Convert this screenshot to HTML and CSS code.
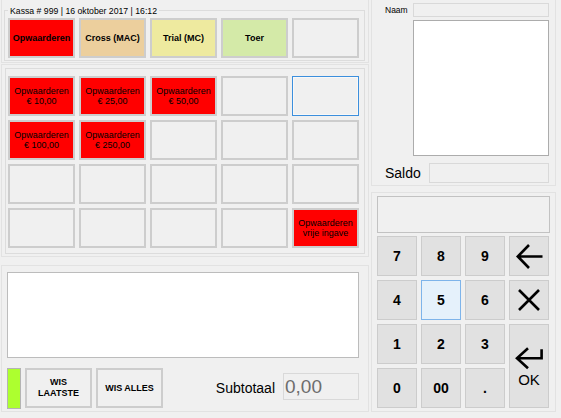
FILE: index.html
```html
<!DOCTYPE html>
<html>
<head>
<meta charset="utf-8">
<link rel="stylesheet" href="styles.css">
</head>
<body>
<div class="app">
  <div class="left">
    <div class="panel panel-a">
      <div class="group group-a">
        <span class="group-title">Kassa # 999 | 16 oktober 2017 | 16:12</span>
        <div class="top-row">
          <div class="btn bold red">Opwaarderen</div>
          <div class="btn bold tan">Cross (MAC)</div>
          <div class="btn bold khaki">Trial (MC)</div>
          <div class="btn bold lime">Toer</div>
          <div class="btn bold"></div>
        </div>
      </div>
    </div>
    <div class="panel panel-b">
      <div class="group group-b">
        <div class="grid">
          <div class="btn red">Opwaarderen<br>€ 10,00</div>
          <div class="btn red">Opwaarderen<br>€ 25,00</div>
          <div class="btn red">Opwaarderen<br>€ 50,00</div>
          <div class="btn"></div>
          <div class="btn focus"></div>
          <div class="btn red">Opwaarderen<br>€ 100,00</div>
          <div class="btn red">Opwaarderen<br>€ 250,00</div>
          <div class="btn"></div>
          <div class="btn"></div>
          <div class="btn"></div>
          <div class="btn"></div>
          <div class="btn"></div>
          <div class="btn"></div>
          <div class="btn"></div>
          <div class="btn"></div>
          <div class="btn"></div>
          <div class="btn"></div>
          <div class="btn"></div>
          <div class="btn"></div>
          <div class="btn red">Opwaarderen<br>vrije ingave</div>
        </div>
      </div>
    </div>
    <div class="panel panel-c">
      <div class="textarea"></div>
      <div class="bottom-row">
        <div class="indicator"></div>
        <div class="btn bold wis">WIS<br>LAATSTE</div>
        <div class="btn bold wis">WIS ALLES</div>
        <span class="subtotal-label">Subtotaal</span>
        <div class="subtotal">0,00</div>
      </div>
    </div>
  </div>
  <div class="right">
    <div class="panel panel-d">
      <div class="naam-row">
        <span class="naam-label">Naam</span>
        <div class="field naam-field"></div>
      </div>
      <div class="list"></div>
      <div class="saldo-row">
        <span class="saldo-label">Saldo</span>
        <div class="field saldo-field"></div>
      </div>
    </div>
    <div class="panel panel-e">
      <div class="display"></div>
      <div class="numpad">
        <div class="key">7</div>
        <div class="key">8</div>
        <div class="key">9</div>
        <div class="key"><svg class="icon" width="38" height="38" viewBox="0 0 38 38"><path d="M19 8 L7.8 19.5 L19 31 M7.8 19.5 H32.5" fill="none" stroke="#000" stroke-width="2.6"/></svg></div>
        <div class="key">4</div>
        <div class="key active">5</div>
        <div class="key">6</div>
        <div class="key"><svg class="icon" width="38" height="38" viewBox="0 0 38 38"><path d="M9 9 L29 29 M29 9 L9 29" fill="none" stroke="#000" stroke-width="2.6"/></svg></div>
        <div class="key">1</div>
        <div class="key">2</div>
        <div class="key">3</div>
        <div class="key ok"><svg class="icon" width="38" height="47" viewBox="0 0 38 47"><path d="M18 23.3 L7 33.3 L18 43.3 M7 33.3 H32.8 M31.6 24.3 V34.5" fill="none" stroke="#000" stroke-width="2.6"/></svg><span>OK</span></div>
        <div class="key">0</div>
        <div class="key">00</div>
        <div class="key">.</div>
      </div>
    </div>
  </div>
</div>
</body>
</html>
```

FILE: styles.css
```css
* { box-sizing: border-box; }
html, body { margin: 0; padding: 0; }
body {
  background: #f0f0f0;
  font-family: "Liberation Sans", Arial, sans-serif;
  color: #000;
  width: 561px;
  height: 418px;
  overflow: hidden;
}
.app { display: flex; padding-left: 1px; gap: 2px; }
.left { width: 368px; display: flex; flex-direction: column; }
.right { width: 185px; display: flex; flex-direction: column; }
.panel { border: 1px solid #e2e2e2; }
.group { border: 1px solid #dcdcdc; }

.panel-a { height: 63px; border-top: none; }
.group-a { width: 361px; height: 51px; margin: 10px 0 0 2px; }
.group-title {
  display: block;
  width: max-content;
  margin: -6px 0 0 3px;
  padding: 0 2px;
  background: #f0f0f0;
  font-size: 8.7px;
  line-height: 12px;
}
.top-row { display: flex; gap: 4px; margin: 1px 0 0 3px; }

.btn {
  width: 67px;
  height: 40px;
  border: 2px solid #cdcdcd;
  background: #f0f0f0;
  display: flex;
  align-items: center;
  justify-content: center;
  text-align: center;
  font-size: 9px;
  line-height: 10px;
}
.bold { font-weight: bold; }
.red { background: #ff0000; }
.tan { background: #eccf9d; }
.khaki { background: #eeea9f; }
.lime { background: #d4eaa8; }
.focus { border: 1px solid #3c8fdd; box-shadow: inset 0 0 0 1px #f8f8f8; }

.panel-b { height: 193px; margin-top: 1px; }
.group-b { width: 360px; height: 186px; margin: 3px 0 0 3px; padding: 7px 0 0 2px; }
.grid {
  display: grid;
  grid-template-columns: repeat(5, 67px);
  grid-auto-rows: 40px;
  gap: 4px;
}

.panel-c { height: 147px; margin-top: 8px; padding: 6px 0 0 5px; }
.textarea { width: 352px; height: 86px; background: #fff; border: 1px solid #bcbcbc; }
.bottom-row { display: flex; align-items: flex-start; width: 352px; margin-top: 10px; }
.indicator { width: 14px; height: 41px; background: #adff2f; border: 1px solid #b4b4b4; margin-right: 4px; }
.wis { margin-right: 4px; line-height: 11px; }
.subtotal-label { margin: 12px 8px 0 auto; font-size: 14px; line-height: 16px; }
.subtotal {
  width: 76px;
  height: 27px;
  margin-top: 5px;
  border: 1px solid #d9d9d9;
  background: #f0f0f0;
  color: #6d6d6d;
  font-size: 19px;
  line-height: 25px;
  padding-left: 1px;
}

.panel-d { height: 186px; border-top: none; }
.field { background: #f0f0f0; border: 1px solid #d9d9d9; }
.naam-row { display: flex; align-items: center; padding: 3px 6px 0 13px; }
.naam-label { font-size: 8.5px; line-height: 14px; }
.naam-field { width: 136px; height: 14px; margin-left: auto; }
.list { width: 136px; height: 136px; margin: 3px 0 0 41px; background: #fff; border: 1px solid #acacac; }
.saldo-row { display: flex; align-items: center; margin-top: 7px; padding: 0 6px 0 13px; }
.saldo-label { font-size: 14px; line-height: 20px; }
.saldo-field { width: 120px; height: 20px; margin-left: auto; }

.panel-e { height: 220px; margin-top: 6px; padding: 3px 0 0 5px; }
.display { width: 173px; height: 37px; border: 1px solid #c2c2c2; background: #f0f0f0; }
.numpad {
  display: grid;
  grid-template-columns: repeat(4, 40px);
  grid-auto-rows: 40px;
  gap: 4px;
  margin-top: 3px;
}
.key {
  border: 1px solid #cccccc;
  background: #e1e1e1;
  display: flex;
  align-items: center;
  justify-content: center;
  font-weight: bold;
  font-size: 14px;
}
.key.active { background: #e5f1fb; border-color: #7eb4ea; }
.key.ok {
  grid-row: span 2;
  flex-direction: column;
  justify-content: flex-start;
  font-weight: normal;
  font-size: 15px;
  line-height: 15px;
}
.icon { display: block; flex: none; }
```
